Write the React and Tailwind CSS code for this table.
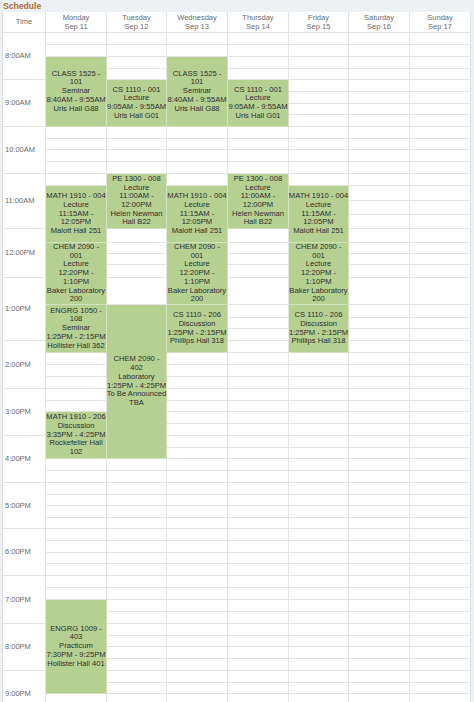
import React from 'react';

const days = [
  ['Monday', 'Sep 11'],
  ['Tuesday', 'Sep 12'],
  ['Wednesday', 'Sep 13'],
  ['Thursday', 'Sep 14'],
  ['Friday', 'Sep 15'],
  ['Saturday', 'Sep 16'],
  ['Sunday', 'Sep 17'],
];

const hours = [
  '8:00AM', '9:00AM', '10:00AM', '11:00AM', '12:00PM', '1:00PM', '2:00PM',
  '3:00PM', '4:00PM', '5:00PM', '6:00PM', '7:00PM', '8:00PM', '9:00PM',
];

const classOne = ['CLASS 1525 -', '101', 'Seminar', '8:40AM - 9:55AM', 'Uris Hall G88'];
const csLec = ['CS 1110 - 001', 'Lecture', '9:05AM - 9:55AM', 'Uris Hall G01'];
const mathLec = ['MATH 1910 - 004', 'Lecture', '11:15AM -', '12:05PM', 'Malott Hall 251'];
const peLec = ['PE 1300 - 008', 'Lecture', '11:00AM -', '12:00PM', 'Helen Newman', 'Hall B22'];
const chemLec = ['CHEM 2090 -', '001', 'Lecture', '12:20PM -', '1:10PM', 'Baker Laboratory', '200'];
const csDis = ['CS 1110 - 206', 'Discussion', '1:25PM - 2:15PM', 'Phillips Hall 318'];

// grid lines: row 1 is the header, slot n (15 min from 8:00AM) is row n + 2
const events = [
  { cls: 'col-start-2 row-start-4 row-end-10', lines: classOne },
  { cls: 'col-start-3 row-start-6 row-end-10', lines: csLec },
  { cls: 'col-start-4 row-start-4 row-end-10', lines: classOne },
  { cls: 'col-start-5 row-start-6 row-end-10', lines: csLec },
  { cls: 'col-start-2 row-start-15 row-end-19', lines: mathLec },
  { cls: 'col-start-3 row-start-14 row-end-18', lines: peLec },
  { cls: 'col-start-4 row-start-15 row-end-19', lines: mathLec },
  { cls: 'col-start-5 row-start-14 row-end-18', lines: peLec },
  { cls: 'col-start-6 row-start-15 row-end-19', lines: mathLec },
  { cls: 'col-start-2 row-start-19 row-end-23', lines: chemLec },
  { cls: 'col-start-4 row-start-19 row-end-23', lines: chemLec },
  { cls: 'col-start-6 row-start-19 row-end-23', lines: chemLec },
  { cls: 'col-start-2 row-start-23 row-end-27', lines: ['ENGRG 1050 -', '108', 'Seminar', '1:25PM - 2:15PM', 'Hollister Hall 362'] },
  { cls: 'col-start-4 row-start-23 row-end-27', lines: csDis },
  { cls: 'col-start-6 row-start-23 row-end-27', lines: csDis },
  { cls: 'col-start-3 row-start-23 row-end-36', lines: ['CHEM 2090 -', '402', 'Laboratory', '1:25PM - 4:25PM', 'To Be Announced', 'TBA'] },
  { cls: 'col-start-2 row-start-32 row-end-36', lines: ['MATH 1910 - 206', 'Discussion', '3:35PM - 4:25PM', 'Rockefeller Hall', '102'] },
  { cls: 'col-start-2 row-start-48 row-end-56', lines: ['ENGRG 1009 -', '403', 'Practicum', '7:30PM - 9:25PM', 'Hollister Hall 401'] },
];

const SLOTS = 56;

function App() {
  return (
    <div className="h-[702px] overflow-hidden bg-[#edf1f4] font-['Liberation_Sans',Arial,sans-serif]">
      <div className="h-[12px] pl-[3px] text-[8.6px] font-bold leading-[12px] text-[#b06d36]">Schedule</div>

      <div className="ml-[2px] grid w-[469px] grid-cols-[43px_61px_60px_61px_61px_60px_61px_61px] grid-rows-[21px_12px_12px_12px_11px_12px_12px_11px_12px_12px_11px_12px_12px_12px_15px_14px_14px_14px_11px_11px_13px_27px_13px_11px_12px_12px_12px_12px_12px_12px_11px_12px_12px_12px_11px_12px_12px_12px_11px_12px_11px_12px_12px_11px_12px_12px_12px_12px_12px_12px_11px_12px_12px_12px_11px_12px_12px] border-l border-[#dedede] bg-white text-[7.5px] text-[#6a6a6a]">
        {/* header */}
        <div className="col-start-1 row-start-1 flex items-center justify-center border-b border-r border-[#e3e3e3]">Time</div>
        {days.map(([d, date], i) => (
          <div
            key={d}
            className="row-start-1 flex flex-col items-center justify-center border-b border-r border-[#e3e3e3] leading-[9px]"
            style={{ gridColumn: i + 2 }}
          >
            <span>{d}</span>
            <span>{date}</span>
          </div>
        ))}

        {/* time column */}
        {hours.map((h, i) => (
          <div
            key={h}
            className="col-start-1 flex items-center border-b border-r border-[#e3e3e3] pl-[2px]"
            style={{ gridRow: `${i * 4 + 2} / span 4` }}
          >
            {h}
          </div>
        ))}

        {/* empty slots */}
        {Array.from({ length: SLOTS }).map((_, r) =>
          days.map((_, c) => (
            <div
              key={`${r}-${c}`}
              className="border-b border-r border-[#e4e4e4]"
              style={{ gridRow: r + 2, gridColumn: c + 2 }}
            />
          ))
        )}

        {/* classes */}
        {events.map((e, i) => (
          <div
            key={i}
            className={`${e.cls} z-10 flex flex-col items-center justify-center border-b border-r border-[#d3e1bf] bg-[#b6d092] text-center text-[7.6px] leading-[8.7px] text-[#2e2e2e]`}
          >
            {e.lines.map((l, j) => (
              <span key={j} className="whitespace-nowrap">{l}</span>
            ))}
          </div>
        ))}
      </div>
    </div>
  );
}

export default App;
